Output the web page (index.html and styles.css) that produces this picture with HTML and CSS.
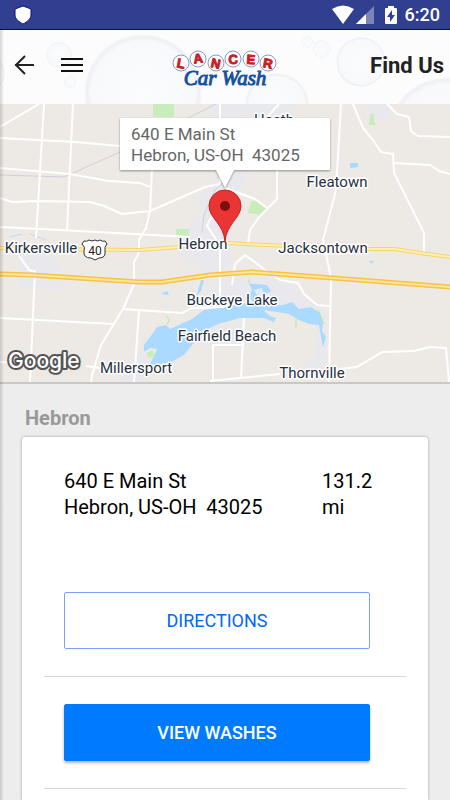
FILE: index.html
```
<!DOCTYPE html>
<html lang="en">
<head>
    <meta charset="utf-8">
    <meta name="viewport" content="width=device-width, initial-scale=1">
    <title>Lancer Car Wash - Find Us</title>
    <link rel="stylesheet" href="styles.css">
</head>

<body>

<div class="status-bar">
    <svg class="shield" width="18" height="20" viewBox="0 0 18 20">
        <path d="M9 1 L17 4 V10 C17 14 13 17 9 19 C5 17 1 14 1 10 V4 Z" fill="#fff" stroke="#10107c"/>
    </svg>
    <div class="status-icons">
        <svg width="42" height="20" viewBox="0 0 42 20">
            <path d="M0 4 Q11 -3 22 4 L11 19 Z" fill="#fff"/>
            <path d="M42 1 V19 H24 Z" fill="#7c84b8"/>
            <path d="M34 9 V19 H24 Z" fill="#fff"/>
        </svg>
        <svg class="battery" width="12" height="20" viewBox="0 0 12 20">
            <path d="M3 1 H9 V3 H11 Q12 3 12 4 V18 Q12 19 11 19 H1 Q0 19 0 18 V4 Q0 3 1 3 H3 Z" fill="#fff"/>
            <path d="M7 5 L2 12 H5 V17 L10 10 H7 Z" fill="#303f8f"/>
        </svg>
        <span class="clock">6:20</span>
    </div>
</div>

<div class="page">
    <header class="toolbar">
        <svg class="bubbles" viewBox="0 30 450 74" preserveAspectRatio="xMidYMid slice">
            <defs>
                <radialGradient id="bubble">
                    <stop offset="0" stop-color="#fbfcfd"/>
                    <stop offset="0.88" stop-color="#f8f9fa"/>
                    <stop offset="0.95" stop-color="#eff0f4"/>
                    <stop offset="0.98" stop-color="#f4f5f8"/>
                    <stop offset="1" stop-color="#fcfcfd"/>
                </radialGradient>
            </defs>
            <circle cx="-16" cy="73" r="21" fill="url(#bubble)"/>
            <circle cx="143" cy="93" r="59" fill="url(#bubble)"/>
            <circle cx="59" cy="55" r="13" fill="url(#bubble)"/>
            <circle cx="70" cy="82" r="6" fill="url(#bubble)"/>
            <circle cx="307" cy="42" r="6" fill="url(#bubble)"/>
            <circle cx="322" cy="49" r="9" fill="url(#bubble)"/>
            <circle cx="361" cy="62" r="25" fill="url(#bubble)"/>
            <circle cx="277" cy="105" r="32" fill="url(#bubble)"/>
            <circle cx="447" cy="137" r="60" fill="url(#bubble)"/>
        </svg>

        <div class="nav-buttons">
            <button class="icon-button" aria-label="Back">
                <svg width="20" height="20" viewBox="0 0 20 20">
                    <path d="M20 10 H1 M11 1 L2 10 L11 19" fill="none" stroke="#222" stroke-width="2"/>
                </svg>
            </button>
            <button class="icon-button" aria-label="Menu">
                <svg width="24" height="20" viewBox="0 0 24 20">
                    <path d="M1 4 H23 M1 10 H23 M1 16 H23" stroke="#111" stroke-width="2"/>
                </svg>
            </button>
        </div>

        <svg class="logo" width="106" height="56" viewBox="0 -12 106 56" role="img" aria-label="Lancer Car Wash">
            <g fill="#fff" stroke="#8c98c6">
                <circle cx="9" cy="14" r="8"/>
                <circle cx="26" cy="10" r="8"/>
                <circle cx="44" cy="14" r="8"/>
                <circle cx="61" cy="10" r="8"/>
                <circle cx="79" cy="10" r="8"/>
                <circle cx="96" cy="14" r="8"/>
            </g>
            <g class="logo-letters">
                <text x="9" y="19" transform="rotate(10 9 14)">L</text>
                <text x="26" y="14" transform="rotate(-8 26 10)">A</text>
                <text x="44" y="19" transform="rotate(12 44 14)">N</text>
                <text x="61" y="15" transform="rotate(-4 61 10)">C</text>
                <text x="79" y="15" transform="rotate(4 79 10)">E</text>
                <text x="96" y="19" transform="rotate(10 96 14)">R</text>
            </g>
            <text class="logo-script" x="53" y="36">Car Wash</text>
        </svg>

        <h1>Find Us</h1>
    </header>

    <div class="map">
        <svg viewBox="0 104 450 278" preserveAspectRatio="xMidYMid slice">
            <rect x="0" y="104" width="450" height="278" fill="#edeae6"/>

            <!-- built-up areas -->
            <g fill="#e9e8ec">
                <path d="M212 104 H300 L275 118 L240 190 L212 225 L196 200 L215 180 Z"/>
                <path d="M370 104 H389 V117 L375 122 L368 113 Z"/>
                <path d="M175 242 L195 215 L232 220 L230 265 L210 275 L180 256 Z"/>
                <path d="M20 250 L40 242 L60 265 L62 290 L20 288 Z"/>
                <path d="M190 305 L225 275 L292 281 L308 300 L326 310 V380 L312 382 L318 330 L290 305 L240 300 Z"/>
                <path d="M135 353 H150 L160 372 L140 382 H120 Z"/>
                <path d="M303 361 H313 V370 H303 Z"/>
                <path d="M200 325 H245 V345 H200 Z"/>
            </g>

            <!-- parks -->
            <g fill="#c9edba">
                <path d="M153 104 H174 V117 H153 Z"/>
                <path d="M176 229 H189 V236 H176 Z"/>
                <path d="M251 202 L257 200 L268 209 L261 215 L248 213 Z"/>
                <path d="M370 115 L374 113 V122 L377 125 H369 Z"/>
            </g>

            <!-- lake -->
            <g fill="#aadaff">
                <path d="M144 352 L144 345 L153 333 L157 327 L166 325 L170 329 L192 319 L204 310 L224 307 L253 302 L249 297 L252 290 L249 283 L254 284 L267 285 L271 291 L264 295 L262 288 L254 290 L259 298 L266 305 L283 305 L292 302 L299 309 L311 307 L320 313 L323 322 L322 331 L326 337 L323 347 L321 337 L319 325 L309 324 L299 320 L289 314 L277 312 L263 310 L270 316 L276 318 L274 322 L263 318 L240 318 L218 324 L204 331 L192 345 L184 355 L173 361 L163 369 L149 366 L155 354 L157 349 L150 348 Z"/>
                <path d="M350 163 H358 V167 L350 168 Z"/>
                <path d="M161 294 L167 291 L169 295 Z"/>
                <path d="M369 261 L374 261 L371 264 Z"/>
                <path d="M201 280 L204 280 L201 291 L196 297 Z"/>
            </g>
            <path d="M9 237 L22 234 M30 234 L46 240" stroke="#b8def6" fill="none"/>
            <path d="M167 316 L169 320 L167 325 M296 317 V329 M318 310 L324 324 M249 279 V283" stroke="#b9e8a2" fill="none"/>
            <path d="M146 353 L153 350 L155 356 L149 358 Z" fill="#c9edba"/>

            <!-- railway -->
            <path d="M0 175 L64 177 L120 152 L216 104 M230 177 L215 190 L204 215 L202 232" stroke="#cfcfd8" fill="none"/>

            <!-- local roads -->
            <g class="roads">
                <path d="M0 127 L39 104"/>
                <path d="M44 104 L36 238"/>
                <path d="M73 104 L67 230"/>
                <path d="M0 138 L75 142 L120 146"/>
                <path d="M0 168 L70 174 L109 181 L140 183 L150 187"/>
                <path d="M0 198 L12 202 L36 201 L90 202 L104 206 L122 214 L150 211 L205 187 L220 184"/>
                <path d="M0 227 L60 230 L190 237"/>
                <path d="M152 170 L150 211 L146 228 L139 240 L139 253 L134 262 V284 L123 309 L101 345 L92 375 L91 382"/>
                <path d="M18 254 L29 270 L36 272 M35 270 L30 382"/>
                <path d="M0 318 L113 324 M0 362 L34 364 M86 366 L100 368"/>
                <path d="M123 309 L182 313 L192 308 L225 307"/>
                <path d="M139 311 L134 382"/>
                <path d="M220 104 V184 M220 200 L207 226 L220 245 V306"/>
                <path d="M279 104 L268 116 M341 104 L336 190 L323 240 L331 278 L329 382"/>
                <path d="M353 104 L363 128 L373 140 L381 152 L393 154 L394 173 L424 233 V252"/>
                <path d="M387 104 L397 114 L409 117 L411 131 L418 136 L450 137"/>
                <path d="M394 163 L430 165 L439 171 L450 174"/>
                <path d="M277 170 V199 L260 216 L250 230 L248 243"/>
                <path d="M225 188 L255 199 L267 208"/>
                <path d="M232 285 L235 264 L245 255 L264 269 L280 280 L298 283 L304 294 L317 305 L329 306"/>
                <path d="M244 318 L241 378 M213 382 V345 H244"/>
                <path d="M210 381 L280 374 M330 370 L357 367 L382 352 L414 351 L430 347 L446 348 L449 382"/>
            </g>

            <!-- highways -->
            <g fill="none" stroke-linejoin="round">
                <path class="route-edge" d="M0 248 L35 249 L139 250 L180 247 L212 242 L245 244 L290 246 L330 249 L395 249 L420 253 L450 257"/>
                <path class="route" d="M0 248 L35 249 L139 250 L180 247 L212 242 L245 244 L290 246 L330 249 L395 249 L420 253 L450 257"/>
                <path class="freeway-edge" d="M0 274 L32 275 L139 282 L162 282 L210 275 L252 272 L320 277 L450 287"/>
                <path class="freeway" d="M0 274 L32 275 L139 282 L162 282 L210 275 L252 272 L320 277 L450 287"/>
            </g>

            <!-- route shield -->
            <path d="M84 241 Q87 242 89 240 Q92 242 95 240 Q98 242 100 240 Q103 242 105 241 L107 244 Q104 247 105 251 Q106 258 99 258 L95 260 L91 258 Q83 258 84 251 Q86 247 82 244 Z" fill="#fff" stroke="#333"/>
            <text class="shield-number" x="95" y="255">40</text>

            <g class="places">
                <text x="274" y="125">Heath</text>
                <text x="337" y="187">Fleatown</text>
                <text x="41" y="253">Kirkersville</text>
                <text x="203" y="249">Hebron</text>
                <text x="323" y="253">Jacksontown</text>
                <text x="232" y="305">Buckeye Lake</text>
                <text x="227" y="341">Fairfield Beach</text>
                <text x="136" y="373">Millersport</text>
                <text x="312" y="378">Thornville</text>
            </g>

            <text class="google" x="8" y="368">Google</text>

            <!-- callout and marker -->
            <g class="callout">
                <path d="M120 118 H330 V170 H234 L225 188 L216 170 H120 Z"/>
                <text x="131" y="140">640 E Main St</text>
                <text x="131" y="161">Hebron, US-OH&#160; 43025</text>
            </g>
            <path d="M225 242 C224 224 209 218 209 206 A16 16 0 0 1 241 206 C241 218 226 224 225 242 Z" fill="#ea3535" stroke="#c92020"/>
            <circle cx="225" cy="206" r="5" fill="#7c1010"/>
        </svg>
    </div>

    <main class="locations">
        <h2>Hebron</h2>
        <div class="card">
            <div class="address-row">
                <p class="address">640 E Main St<br>Hebron, US-OH&nbsp; 43025</p>
                <p class="distance">131.2 mi</p>
            </div>
            <div class="action">
                <button class="btn btn-outline">DIRECTIONS</button>
            </div>
            <div class="action">
                <button class="btn btn-solid">VIEW WASHES</button>
            </div>
        </div>
    </main>
</div>

</body>
</html>
```
FILE: styles.css
```
* {
    box-sizing: border-box;
}

body {
    font-family: Roboto, "Liberation Sans", sans-serif;
    background-color: #ededed;
    margin: 0;
    min-height: 100vh;
    display: flex;
    flex-direction: column;
}

h1, h2, p {
    margin: 0;
}

.status-bar {
    height: 30px;
    padding: 0 10px 0 14px;
    display: flex;
    align-items: center;
    justify-content: space-between;
    background-color: #303f8f;
    border-bottom: 1px solid #08086c;
}

.status-icons {
    display: flex;
    align-items: center;
}

.battery {
    margin: 0 8px 0 11px;
}

.clock {
    color: #fff;
    font-size: 18px;
    font-weight: 500;
    line-height: 20px;
}

.page {
    position: relative;
    flex: 1;
    display: flex;
    flex-direction: column;
}

.page::before {
    content: "";
    position: absolute;
    z-index: 1;
    top: 0;
    bottom: 0;
    left: 0;
    width: 4px;
    background: linear-gradient(to right, rgba(0, 0, 0, 0.16), rgba(0, 0, 0, 0));
}

.toolbar {
    position: relative;
    height: 74px;
    padding: 0 6px 4px;
    display: grid;
    grid-template-columns: 1fr auto 1fr;
    align-items: center;
    background-color: #fcfcfd;
}

.bubbles {
    position: absolute;
    top: 0;
    left: 0;
    width: 100%;
    height: 100%;
}

.nav-buttons,
.logo,
.toolbar h1 {
    position: relative;
}

.nav-buttons {
    display: flex;
    gap: 22px;
    padding-left: 8px;
}

.icon-button {
    padding: 0;
    border: none;
    background: none;
    cursor: pointer;
    display: flex;
    align-items: center;
    min-width: 24px;
}

.logo-letters {
    font-family: "Liberation Sans", sans-serif;
    font-size: 13px;
    font-weight: bold;
    fill: #c81e28;
    stroke: #c81e28;
    text-anchor: middle;
}

.logo-script {
    font-family: "Liberation Serif", serif;
    font-size: 21px;
    font-style: italic;
    fill: #1650a0;
    stroke: #1650a0;
    text-anchor: middle;
}

.toolbar h1 {
    font-size: 22px;
    font-weight: bold;
    color: #222;
    text-align: right;
}

.map {
    height: 280px;
    border-bottom: 2px solid #c8c8c8;
}

.map svg {
    display: block;
    width: 100%;
    height: 100%;
}

.roads {
    fill: none;
    stroke: #fff;
    stroke-width: 2;
    stroke-linejoin: round;
}

.route-edge {
    stroke: #f8d36c;
    stroke-width: 4;
}

.route {
    stroke: #fff0b0;
    stroke-width: 2;
}

.freeway-edge {
    stroke: #f6c344;
    stroke-width: 5;
}

.freeway {
    stroke: #ffe59a;
    stroke-width: 2;
}

.places {
    font-size: 15px;
    fill: #26303f;
    stroke: #fff;
    stroke-width: 3;
    stroke-linejoin: round;
    paint-order: stroke;
    text-anchor: middle;
}

.shield-number {
    font-size: 12px;
    fill: #222;
    text-anchor: middle;
}

.google {
    font-family: Inter, sans-serif;
    font-size: 21px;
    font-weight: 500;
    fill: #fff;
    stroke: #555;
    stroke-width: 4;
    stroke-linejoin: round;
    paint-order: stroke;
}

.callout path {
    fill: #fff;
    filter: drop-shadow(0 1px 1px rgba(0, 0, 0, 0.4));
}

.callout text {
    font-size: 17px;
    fill: #666;
}

.locations {
    flex: 1;
    display: flex;
    flex-direction: column;
    padding: 20px 22px 0;
}

.locations h2 {
    padding-left: 3px;
    margin-bottom: 5px;
    font-size: 20px;
    line-height: 28px;
    font-weight: bold;
    color: #999;
}

.card {
    flex: 1;
    padding: 31px 22px 11px;
    background-color: #fff;
    border-radius: 3px 3px 0 0;
    box-shadow: 0 0 3px rgba(0, 0, 0, 0.35);
}

.address-row {
    display: flex;
    justify-content: space-between;
    min-height: 97px;
    padding: 0 20px;
    font-size: 20px;
    line-height: 26px;
    color: #000;
}

.distance {
    width: 64px;
}

.action {
    padding: 27px 36px 27px 20px;
    border-bottom: 1px solid #d8d8d8;
}

.btn {
    display: block;
    width: 100%;
    height: 57px;
    border: 1px solid #7ca0ff;
    border-radius: 2px;
    font-family: inherit;
    font-size: 18px;
    cursor: pointer;
}

.btn-outline {
    background-color: #fff;
    color: #0069f5;
}

.btn-solid {
    background-color: #007bff;
    border-color: #007bff;
    color: #fff;
    font-weight: 500;
    box-shadow: 0 2px 3px rgba(0, 0, 0, 0.3);
}
```
